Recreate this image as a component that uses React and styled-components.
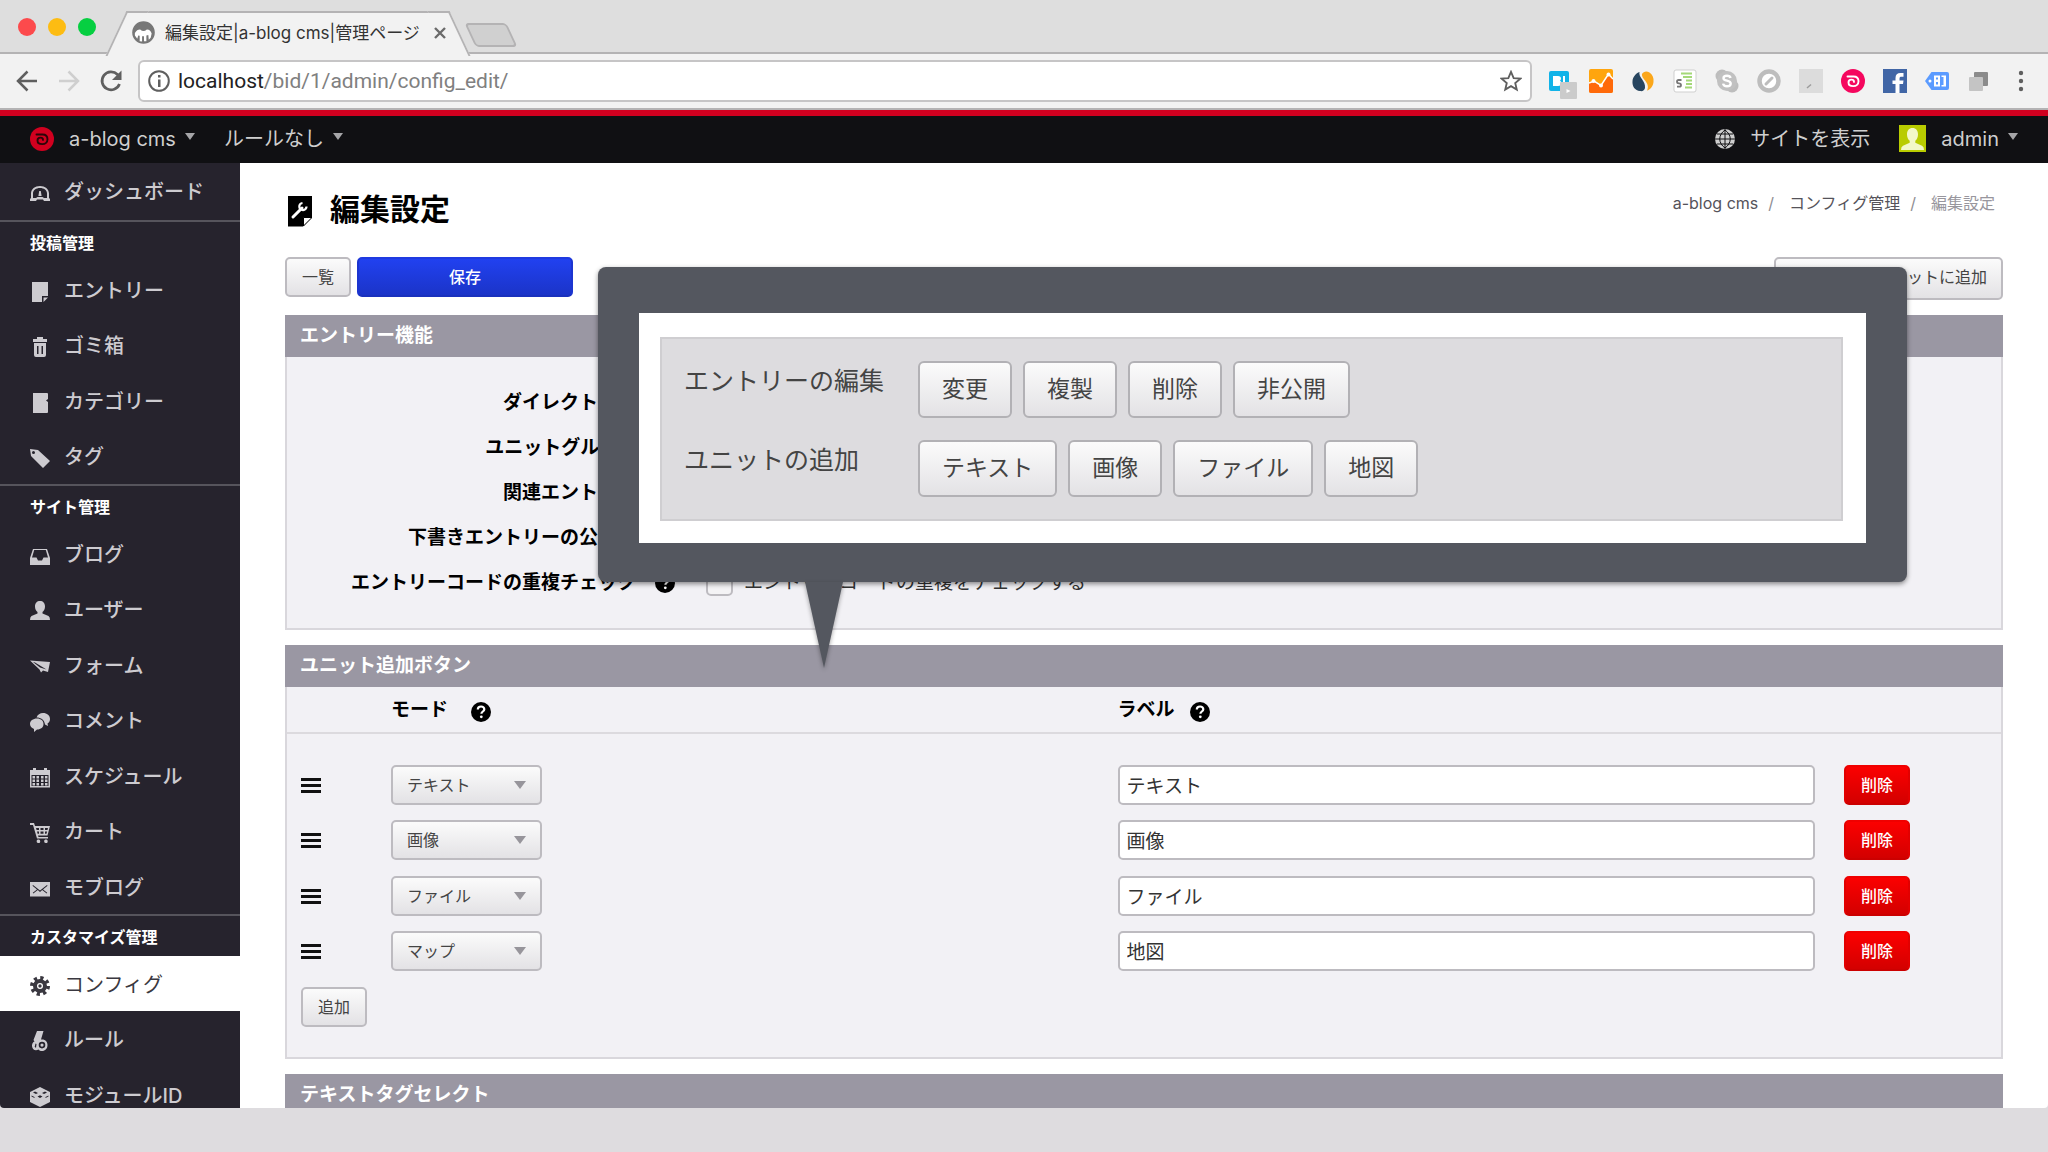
import React, { useState } from 'react';
import styled, { createGlobalStyle, css } from 'styled-components'

const GlobalStyle = createGlobalStyle`
  * {
    box-sizing: border-box;
  }
  html, body {
    margin: 0;
    padding: 0;
    overflow: hidden;
    background: #dedcdf;
  }
  body, button, input, select {
    font-family: Inter, "Noto Sans CJK JP", sans-serif;
  }
  a {
    color: inherit;
    text-decoration: none;
  }
`

// browser window:
const Desktop = styled.div`
  height: 100vh;
  padding-bottom: 44px;
  background: #dedcdf;
`
const Browser = styled.div`
  display: flex;
  flex-direction: column;
  height: 100%;
  overflow: hidden;
  background: #fff;
  border-radius: 0 0 4px 4px;
`
const TabStrip = styled.div`
  display: flex;
  flex: none;
  align-items: flex-end;
  height: 54px;
  background: #dedede;
  box-shadow: inset 0 -2px 0 #b4b3b4;
`
const Lights = styled.div`
  display: flex;
  align-self: center;
  gap: 12px;
  padding-left: 18px;
`
const Light = styled.span`
  width: 18px;
  height: 18px;
  border-radius: 50%;
  background: ${(props) => props.$color};
`
const Tab = styled.div`
  position: relative;
  z-index: 1;
  display: flex;
  align-items: center;
  width: 322px;
  height: 43px;
  margin-left: 31px;
  padding: 0 2px 2px 5px;
  border-top: 2px solid #b4b3b4;
  background: #f2f2f2;
  color: #333;
  font-size: 17px;
  line-height: 24px;
  white-space: nowrap;

  &::before,
  &::after {
    content: '';
    position: absolute;
    z-index: -1;
    top: -2px;
    width: 20px;
    height: 43px;
    border-top: 2px solid #b4b3b4;
    background: #f2f2f2;
  }
  &::before {
    left: -11px;
    border-left: 2px solid #b4b3b4;
    transform: skewX(-25deg);
  }
  &::after {
    right: -11px;
    border-right: 2px solid #b4b3b4;
    transform: skewX(25deg);
  }
`
const TabTitle = styled.span`
  flex: 1;
  margin-left: 10px;
`
const TabClose = styled.button`
  display: flex;
  padding: 0;
  border: 0;
  background: none;
  color: #6b6b6b;
`
const NewTab = styled.button`
  width: 42px;
  height: 24px;
  margin: 0 0 7px 21px;
  padding: 0;
  border: 2px solid #b4b3b4;
  border-radius: 4px;
  background: #d0d0d0;
  transform: skewX(25deg);
`
const Toolbar = styled.div`
  display: flex;
  flex: none;
  align-items: center;
  gap: 15px;
  height: 56px;
  padding: 0 15px;
  border-bottom: 2px solid #b4b3b4;
  background: #f2f2f2;
`
const IconGroup = styled.div`
  display: flex;
  gap: 18px;
`
const IconButton = styled.button`
  display: flex;
  width: 24px;
  height: 24px;
  padding: 0;
  border: 0;
  background: none;
  color: #5f5f5f;

  &:disabled {
    color: #cfcfcf;
  }
`
const AddressBar = styled.div`
  display: flex;
  flex: 1;
  align-items: center;
  height: 42px;
  padding: 0 8px;
  border: 2px solid #c6c5c6;
  border-radius: 6px;
  background: #fff;
  color: #5f5f5f;
`
const Url = styled.div`
  flex: 1;
  margin-left: 8px;
  color: #808080;
  font-family: Roboto, sans-serif;
  font-size: 21px;
  line-height: 30px;
`
const Host = styled.span`
  color: #222;
`

// admin header:
const AdminHeader = styled.header`
  display: flex;
  flex: none;
  justify-content: space-between;
  align-items: center;
  height: 53px;
  padding: 0 30px 2px;
  border-top: 6px solid #d1001f;
  background: #101013;
  color: #cfcfcf;
  font-size: 20px;
  line-height: 28px;
`
const HeaderGroup = styled.nav`
  display: flex;
  align-items: center;
  gap: 29px;
`
const HeaderLink = styled.a`
  display: flex;
  align-items: center;
  gap: 15px;
`
const CaretText = styled.span`
  display: flex;
  align-items: center;
  gap: 9px;

  &::after {
    content: '';
    margin-bottom: 4px;
    border: 5px solid transparent;
    border-top: 7px solid #a5a5a8;
    border-bottom: 0;
  }
`

// side navigation:
const Body = styled.div`
  display: flex;
  flex: 1;
  min-height: 0;
`
const Side = styled.nav`
  flex: none;
  width: 240px;
  background: #26232d;
  color: #cdcbd0;
`
const SideGroup = styled.div`
  & + & {
    border-top: 2px solid #56545c;
  }
`
const SideTitle = styled.h2`
  margin: 0;
  padding: 8px 30px 6px;
  color: #fff;
  font-size: 16px;
  line-height: 26px;
`
const SideList = styled.ul`
  margin: 0;
  padding: 0;
  list-style: none;
`
const SideLink = styled.a`
  display: flex;
  align-items: center;
  gap: 14px;
  padding: 15px 30px 12px;
  font-size: 20px;
  font-weight: 500;
  line-height: 28px;

  ${SideGroup}:first-child > & {
    padding-bottom: 14px;
  }
  li:nth-child(even) > & {
    padding-bottom: 13px;
  }
  svg {
    margin-top: 2px;
  }
  ${(props) =>
    props.$active &&
    css`
      background: #fff;
      color: #3a3840;
      font-weight: 400;
    `}
`

// main column:
const Main = styled.main`
  position: relative;
  flex: 1;
  min-width: 0;
  padding: 0 45px;
`
const PageHead = styled.div`
  display: flex;
  justify-content: space-between;
  align-items: flex-start;
  padding: 22px 8px 24px 3px;
`
const PageTitle = styled.h1`
  display: flex;
  align-items: center;
  gap: 18px;
  margin: 0;
  font-size: 30px;
  line-height: 48px;

  svg {
    margin-top: 4px;
  }
`
const Breadcrumb = styled.ol`
  display: flex;
  margin: 0;
  padding: 5px 0 0;
  color: #55535a;
  font-size: 16px;
  line-height: 26px;
  list-style: none;

  li + li::before {
    content: '/';
    margin: 0 15px 0 10px;
    color: #8f8e93;
  }
  li:last-child {
    color: #98969d;
  }
`
const Actions = styled.div`
  display: flex;
  align-items: flex-start;
  gap: 6px;
  margin-bottom: 15px;
`
const buttonFace = css`
  border: 2px solid #bdbbc0;
  border-radius: 5px;
  background: linear-gradient(#fbfbfb, #e3e2e5);
  color: #444;
`
const Button = styled.button`
  ${buttonFace}
  padding: 5px 15px;
  font-size: 16px;
  line-height: 26px;
`
const SaveButton = styled(Button)`
  width: 216px;
  border-color: #1f3ae0 #1c35d0 #1a31bd;
  background: linear-gradient(#2141f0, #1b34c8);
  color: #fff;
  font-weight: 500;
`
const DeleteButton = styled(Button)`
  border-color: #f00000 #e20000 #cc0000;
  background: linear-gradient(#fb0000, #d30000);
  color: #fff;
  font-weight: 500;
`
const ShortcutButton = styled(Button)`
  width: 229px;
  margin-left: auto;
  padding: 5px 14px 8px;
  text-align: right;
`
const Section = styled.section`
  margin-bottom: 15px;
  border: 2px solid #d9d7dc;
  border-top: 0;
  background: #f2f1f5;
`
const SectionTitle = styled.h2`
  margin: 0 -2px;
  padding: 7px 15px;
  background: #9a97a3;
  color: #fff;
  font-size: 19px;
  line-height: 28px;
`
const Rows = styled.div`
  padding: 23px 0;
`
const Row = styled.div`
  display: flex;
  align-items: center;
  height: 45px;
  font-size: 19px;
  line-height: 28px;
`
const RowLabel = styled.span`
  width: 349px;
  margin-right: 19px;
  font-weight: 700;
  text-align: right;
`
const CheckLabel = styled.label`
  display: flex;
  align-items: center;
  gap: 11px;
  margin-left: 31px;
  color: #333;
`
const Check = styled.input`
  appearance: none;
  width: 27px;
  height: 27px;
  margin: 0;
  border: 2px solid #bdbbc0;
  border-radius: 5px;
  background: #f4f3f5;
`
const Table = styled.table`
  width: 100%;
  border-collapse: collapse;
  table-layout: fixed;
`
const Th = styled.th`
  width: ${(props) => props.$width || 'auto'};
  padding: 9px 0 8px;
  border-bottom: 2px solid #dcdade;
  font-size: 19px;
  line-height: 28px;
  text-align: left;

  svg {
    margin-left: ${(props) => props.$gap || 0}px;
    vertical-align: -6px;
  }
`
const Td = styled.td`
  padding: 8px 0 7px;
  text-align: left;

  tr:first-child > & {
    padding-top: 31px;
  }
  tr:nth-child(even) > & {
    padding-bottom: 8px;
  }
  &:first-child {
    padding-left: 14px;
  }
  svg, input, button {
    display: block;
  }
`
const SelectBox = styled.div`
  position: relative;
  width: 151px;

  &::after {
    content: '';
    position: absolute;
    top: 16px;
    right: 16px;
    border: 6px solid transparent;
    border-top: 8px solid #97959b;
    border-bottom: 0;
    pointer-events: none;
  }
`
const Select = styled.select`
  ${buttonFace}
  display: block;
  appearance: none;
  width: 100%;
  height: 40px;
  padding: 0 14px;
  font-size: 16px;
`
const TextInput = styled.input`
  width: 96%;
  height: 40px;
  padding: 0 7px 2px;
  border: 2px solid #bdbbc0;
  border-radius: 5px;
  background: #fff;
  color: #333;
  font-size: 19px;
`
const TableFoot = styled.div`
  padding: 8px 14px 30px;
`

// magnified toolbar lying over the page:
const Balloon = styled.div`
  position: absolute;
  top: 104px;
  right: 141px;
  left: 358px;
  padding: 46px 41px 39px;
  border-radius: 8px;
  background: #54575f;
  box-shadow: 0 2px 5px rgba(0, 0, 0, 0.45);

  &::after {
    content: '';
    position: absolute;
    top: 100%;
    left: 207px;
    border: 19px solid transparent;
    border-top: 86px solid #54575f;
    border-bottom: 0;
    filter: drop-shadow(0 2px 2px rgba(0, 0, 0, 0.35));
  }
`
const BalloonPage = styled.div`
  padding: 24px 23px 22px 21px;
  background: #fff;
`
const UnitTools = styled.div`
  display: grid;
  gap: 22px;
  padding: 22px;
  border: 2px solid #cfced1;
  background: #dddcdf;
`
const UnitRow = styled.div`
  display: flex;
  gap: 11px;
`
const UnitLabel = styled.span`
  width: 223px;
  padding-top: 1px;
  color: #444;
  font-size: 25px;
  line-height: 38px;
`
const UnitButton = styled.button`
  ${buttonFace}
  border-color: #b2b1b5;
  border-radius: 6px;
  padding: 9px 22px 10px;
  font-size: 23px;
  line-height: 34px;
`

const SpiralLogo = ({ size, color, inner }) => (
  <svg width={size} height={size} viewBox='0 0 24 24'>
    <circle cx='12' cy='12' r='12' fill={color} />
    <path d='M6.500 7.500h6c3 0 5 1.900 5 4.700 0 2.900-2.200 4.900-5.200 4.900-2.900 0-4.800-1.600-4.800-3.700 0-1.700 1.300-2.800 2.900-2.800 1.600 0 2.600 1 2.600 2.300' fill='none' stroke={inner} strokeWidth='1.900' strokeLinecap='round' />
  </svg>
)

const HelpIcon = () => (
  <svg width='20' height='20' viewBox='0 0 20 20'>
    <circle cx='10' cy='10' r='10' fill='#000' />
    <path d='M6.800 7.600c0-1.900 1.400-3.100 3.300-3.100s3.200 1.100 3.200 2.700c0 2.300-2.900 2.300-2.900 4.600' fill='none' stroke='#fff' strokeWidth='2.200' />
    <circle cx='10.300' cy='14.800' r='1.400' fill='#fff' />
  </svg>
)

const DragIcon = () => (
  <svg width='20' height='17' viewBox='0 0 20 17'>
    <path d='M0 1h20v3H0zM0 7h20v3H0zM0 13h20v3H0z' fill='#111' />
  </svg>
)

const icons = {
  dashboard: <path fillRule='evenodd' d='M0 18v-2l1-1V10.500C1 6 5 3 10 3s9 3 9 7.500V15l1 1v2h-6l-1-1.500H7L6 18zm3-3h3l1.500-1h5l1.500 1h3v-4.500C17 7.200 14 5 10 5S3 7.200 3 10.500zM9.200 8h1.600l.8 5H8.400z' />,
  entry: <path d='M2 0h16v14h-6v6H2zM13.500 20v-4.500H18z' />,
  trash: <path fillRule='evenodd' d='M7 2V0h6v2h4v3H3V2zM4 6h12v12q0 2-2 2H6q-2 0-2-2zm3 3v8h1.500V9zm4.500 0v8H13V9z' />,
  category: <path d='M3 0h14q1 0 1 1v5l-2 1.500L18 9v10q0 1-1 1H3z' />,
  tag: <path fillRule='evenodd' d='M0 1l8 1 12 11-7 7L1 8zm3.500 2a1.500 1.500 0 1 0 0 3 1.500 1.500 0 0 0 0-3z' />,
  blog: <path fillRule='evenodd' d='M3 3h14l3 9v7H0v-7zm1.200 1L2 11.500h4.500l1.500 3h4l1.500-3H18L15.800 4z' />,
  user: <path d='M10 0c3 0 5 2 5 5.500 0 2.500-1 4.500-2.500 5.500v1.500l6 2.500q1.500.8 1.500 4H0q0-3.200 1.500-4l6-2.500V11C6 10 5 8 5 5.500 5 2 7 0 10 0z' />,
  form: <path fillRule='evenodd' d='M0 3.500L20 5l-2 10-5-1.500-2 2-1.500-3zM3 5l7 5.500 6.500 2L5 5.500z' />,
  comment: <path d='M13 1c4 0 7 2.500 7 6 0 2-1 3.500-2.500 4.500L18 14l-3-1.500C14.500 8 11 5.500 6.500 5.500 7.500 2.500 10 1 13 1zM7 6.500c4 0 6.500 2.300 6.500 5.500S11 17.500 7 17.500L4 20v-3C1.500 16 0 14.300 0 12c0-3.200 3-5.500 7-5.500z' />,
  schedule: <path fillRule='evenodd' d='M0 2h3V0h3v2h8V0h3v2h3v17.500H0zm1.500 5v11h17V7zM2.500 8H5v2.500H2.500zm4 0H9v2.500H6.500zm4.500 0h2.500v2.500H11zm4 0h2.500v2.500H15zM2.500 11.500H5V14H2.500zm4 0H9V14H6.500zm4.500 0h2.500V14H11zm4 0h2.500V14H15zM2.500 15H5v2.500H2.500zm4 0H9v2.500H6.500zm4.500 0h2.500v2.500H11zm4 0h2.500v2.500H15z' />,
  cart: <path fillRule='evenodd' d='M0 0h4l1 3h15l-2.500 9.500H8l.5 1.500H18v1.500H7L3 2H0zm6 5l.6 2H9V5zm4.500 0v2h3V5zM15 5v2h2.500l.5-2zM7 8.500l.6 2.300H9V8.500zm3.500 0v2.300h3V8.500zm4.500 0v2.300h1.500l.6-2.300zM8 16.500a1.800 1.800 0 1 1 0 3.500 1.800 1.800 0 0 1 0-3.500zm7.500 0a1.800 1.800 0 1 1 0 3.500 1.800 1.800 0 0 1 0-3.500z' />,
  mail: <path fillRule='evenodd' d='M0 3h20v14.500H0zm3 3l-.5.700L7 10.500l-4.200 3.200.5.700L7.800 11 10 13l2.200-2 4.500 3.400.5-.7-4.200-3.200 4.500-3.800L17 6l-7 5.500z' />,
  config: (
    <>
      <circle cx='10' cy='10' r='8' fill='none' stroke='currentColor' strokeWidth='4' strokeDasharray='3.140 3.143' />
      <path fillRule='evenodd' d='M10 3a7 7 0 1 0 0 14 7 7 0 0 0 0-14zm0 4a3 3 0 1 1 0 6 3 3 0 0 1 0-6zm0 1.300a1.700 1.700 0 1 0 0 3.400 1.700 1.700 0 0 0 0-3.400z' />
    </>
  ),
  rule: <path fillRule='evenodd' d='M7 0h6.500L11 8.500c4.500-.5 6.500 2.300 6.500 5.500 0 3.500-2.300 6-5.500 6-1.500 0-2.500-.5-3.500-1.500C5 20.500 2 18 2 15c0-2.500 1-4 2.500-4.500L3.500 9zm5 10.800a3.300 3.300 0 1 0 0 6.600 3.300 3.300 0 0 0 0-6.600zm0 1.700a1.600 1.600 0 1 1 0 3.200 1.600 1.600 0 0 1 0-3.200zM5.500 12.500l-.8 3.500 1.300.8.5-3.800z' />,
  module: <path fillRule='evenodd' d='M10 0l10 5v10l-10 5L0 15V5zM5 4.500l-2 1 3 1.500 2-1zm10 0l-3 1.500 2 1 3-1.500zM7.500 9.500L10 11l2.500-1.500L10 8.300zM1.500 8.500v1l3 1.500v-1zm17 0l-3 1.500v1l3-1.500z' />,
}

const SideIcon = ({ name }) => (
  <svg width='20' height='20' viewBox='0 0 20 20' fill='currentColor'>
    {icons[name]}
  </svg>
)

const sideGroups = [
  {
    title: '投稿管理',
    items: [
      { icon: 'entry', text: 'エントリー' },
      { icon: 'trash', text: 'ゴミ箱' },
      { icon: 'category', text: 'カテゴリー' },
      { icon: 'tag', text: 'タグ' },
    ],
  },
  {
    title: 'サイト管理',
    items: [
      { icon: 'blog', text: 'ブログ' },
      { icon: 'user', text: 'ユーザー' },
      { icon: 'form', text: 'フォーム' },
      { icon: 'comment', text: 'コメント' },
      { icon: 'schedule', text: 'スケジュール' },
      { icon: 'cart', text: 'カート' },
      { icon: 'mail', text: 'モブログ' },
    ],
  },
  {
    title: 'カスタマイズ管理',
    items: [
      { icon: 'config', text: 'コンフィグ', active: true },
      { icon: 'rule', text: 'ルール' },
      { icon: 'module', text: 'モジュールID' },
    ],
  },
]

const features = [
  'ダイレクト編集',
  'ユニットグループ',
  '関連エントリー',
  '下書きエントリーの公開日',
]

const modes = ['テキスト', '画像', 'ファイル', 'マップ']

const Extensions = () => (
  <IconGroup>
    <IconButton aria-label='はてなブックマーク'>
      <svg width='30' height='30' viewBox='0 0 30 30' overflow='visible'>
        <rect x='2' y='2' width='20' height='20' rx='2' fill='#12b3e8' />
        <path fillRule='evenodd' d='M6 7h5q3 0 3 2.500 0 1.500-1 2.200 1.500.8 1.500 2.600Q14.500 17 11 17H6zM16 7h2v6h-2z' fill='#fff' />
        <rect x='13' y='13' width='17' height='17' rx='1' fill='#cbcbcb' />
        <path d='M19.500 20l4 2-4 2z' fill='#fff' />
      </svg>
    </IconButton>
    <IconButton aria-label='アナリティクス'>
      <svg width='24' height='24' viewBox='0 0 24 24'>
        <rect width='24' height='24' rx='2' fill='#ffa50e' />
        <path d='M0 14l5-2 7 5 7-10 5 3v12q0 2-2 2H2q-2 0-2-2z' fill='#ff6a0a' />
        <path d='M0 14l5-2 7 4.500L19.500 5 24 10' fill='none' stroke='#fff' strokeWidth='1.500' />
        <circle cx='4.500' cy='12' r='2' fill='#fff' />
        <circle cx='12' cy='16.500' r='2' fill='#fff' />
        <circle cx='19.500' cy='5.500' r='2' fill='#fff' />
      </svg>
    </IconButton>
    <IconButton aria-label='ウェブ解析'>
      <svg width='24' height='24' viewBox='0 0 24 24'>
        <path d='M8.500 3C7 8 15 12 14 19c-.5 2.500-2.500 3.500-5 3C4 21.500 1 17.500 1.500 12 1.800 8 5 4 8.500 3z' fill='#27455f' />
        <path d='M11 5c1.500-3 5-3.300 7.500-1.500C21.500 5.500 23 9 22.500 13c-.5 4.500-3.500 8-6.500 8.500C20 14 10 10 11 5z' fill='#fba71b' />
      </svg>
    </IconButton>
    <IconButton aria-label='ソース表示'>
      <svg width='24' height='24' viewBox='0 0 24 24'>
        <rect x='1' y='1' width='22' height='22' rx='2' fill='#fff' stroke='#cfcfcf' />
        <path d='M8 4.500h11M10 8h9M13 11.500h6M13 15h6M12 18.500h7' stroke='#a4d878' strokeWidth='1.800' />
        <path d='M8.500 11H5.500q-1.500 0-1.500 1.700 0 1.600 2 1.600t2 1.700q0 1.700-1.500 1.700H4' fill='none' stroke='#777' strokeWidth='1.800' />
      </svg>
    </IconButton>
    <IconButton aria-label='Skype'>
      <svg width='24' height='24' viewBox='0 0 24 24'>
        <circle cx='7' cy='7' r='6.500' fill='#bdbdbd' />
        <circle cx='17' cy='17' r='6.500' fill='#bdbdbd' />
        <circle cx='12' cy='12' r='10' fill='#c1c1c1' />
        <path d='M15.500 9c-.3-1.500-1.700-2.300-3.500-2.300-2 0-3.500.9-3.500 2.500 0 3.300 7.200 1.700 7.200 5.300 0 1.700-1.500 2.800-3.700 2.800-2.100 0-3.600-1-3.900-2.700' fill='none' stroke='#fff' strokeWidth='2.400' />
      </svg>
    </IconButton>
    <IconButton aria-label='ブロック'>
      <svg width='24' height='24' viewBox='0 0 24 24'>
        <circle cx='12' cy='12' r='9.500' fill='#fff' stroke='#bdbdbd' strokeWidth='4.500' />
        <path d='M9 15l6-6' stroke='#bdbdbd' strokeWidth='3' strokeLinecap='round' />
      </svg>
    </IconButton>
    <IconButton aria-label='拡張機能'>
      <svg width='24' height='24' viewBox='0 0 24 24'>
        <rect width='24' height='24' fill='#dcdcdc' />
        <path d='M8 19l4-3.500' stroke='#9c9c9c' strokeWidth='1.500' />
      </svg>
    </IconButton>
    <IconButton aria-label='a-blog cms'>
      <SpiralLogo size={24} color='#f5075e' inner='#fff' />
    </IconButton>
    <IconButton aria-label='Facebook'>
      <svg width='24' height='24' viewBox='0 0 24 24'>
        <rect width='24' height='24' fill='#4166a6' />
        <path d='M12.500 24v-9H9.500v-3.500h3V9c0-3.200 1.800-5 5-5h3v3.700h-2c-1.500 0-2 .6-2 2v1.800h4l-.5 3.500h-3.500v9z' fill='#fff' />
      </svg>
    </IconButton>
    <IconButton aria-label='タグ管理'>
      <svg width='24' height='24' viewBox='0 0 24 24'>
        <path d='M6.500 3H22q2 0 2 2v14q0 2-2 2H6.500L0 12z' fill='#5b9bff' />
        <circle cx='5' cy='12' r='1.500' fill='#fff' />
        <path fillRule='evenodd' d='M9 6.500h6v11H9zm2 2v2h2v-2zm0 4.500v2.500h2V13zM16.500 6.500H21v11h-4.500v-1.500h2v-8h-2z' fill='#fff' />
      </svg>
    </IconButton>
    <IconButton aria-label='ウィンドウ'>
      <svg width='24' height='24' viewBox='0 0 24 24'>
        <rect x='7' y='3' width='14' height='14' rx='1' fill='#8b8b8b' />
        <rect x='2' y='8' width='14' height='14' rx='1' fill='#c4c4c4' />
      </svg>
    </IconButton>
    <IconButton aria-label='メニュー'>
      <svg width='24' height='24' viewBox='0 0 24 24' fill='currentColor'>
        <circle cx='12' cy='4' r='2.200' />
        <circle cx='12' cy='12' r='2.200' />
        <circle cx='12' cy='20' r='2.200' />
      </svg>
    </IconButton>
  </IconGroup>
)

const BrowserChrome = () => (
  <>
    <TabStrip>
      <Lights>
        <Light $color='#fc4a4c' />
        <Light $color='#fdbc12' />
        <Light $color='#06cf41' />
      </Lights>
      <Tab>
        <svg width='23' height='23' viewBox='0 0 24 24'>
          <circle cx='12' cy='12' r='10.800' fill='#777' stroke='#777' strokeWidth='2' />
          <path d='M3 12.500q2.500-4 6-3.500 1 1.500 3 1.500T15 9q4-.5 5.500 4l-1 4.500-2 2-.5-5-2 .5v6h-2.500v-5h-2v5.500L8 21v-5.500L6.500 15l-1 3.500L3 15z' fill='#fff' />
        </svg>
        <TabTitle>編集設定|a-blog cms|管理ページ</TabTitle>
        <TabClose aria-label='閉じる'>
          <svg width='14' height='14' viewBox='0 0 14 14'>
            <path d='M2 2l10 10M12 2L2 12' stroke='currentColor' strokeWidth='2.400' />
          </svg>
        </TabClose>
      </Tab>
      <NewTab aria-label='新しいタブ' />
    </TabStrip>
    <Toolbar>
      <IconGroup>
        <IconButton aria-label='戻る'>
          <svg width='24' height='24' viewBox='0 0 24 24' fill='none' stroke='currentColor' strokeWidth='2.500'>
            <path d='M22 12H3M12.500 2.500L3 12l9.500 9.500' />
          </svg>
        </IconButton>
        <IconButton aria-label='進む' disabled>
          <svg width='24' height='24' viewBox='0 0 24 24' fill='none' stroke='currentColor' strokeWidth='2.500'>
            <path d='M2 12h19M11.500 2.500L21 12l-9.500 9.500' />
          </svg>
        </IconButton>
        <IconButton aria-label='再読み込み'>
          <svg width='24' height='24' viewBox='0 0 24 24'>
            <path d='M20.500 15A9 9 0 1 1 18.500 5.500L20 7' fill='none' stroke='currentColor' strokeWidth='2.700' />
            <path d='M22.500 1.500V11H13z' fill='currentColor' />
          </svg>
        </IconButton>
      </IconGroup>
      <AddressBar>
        <svg width='22' height='22' viewBox='0 0 22 22'>
          <circle cx='11' cy='11' r='9.800' fill='none' stroke='currentColor' strokeWidth='2' />
          <path d='M10 5h2.500v2.500H10zM10 9.500h2.500V17H10z' fill='currentColor' />
        </svg>
        <Url>
          <Host>localhost</Host>/bid/1/admin/config_edit/
        </Url>
        <svg width='22' height='22' viewBox='0 0 24 24' fill='none' stroke='currentColor' strokeWidth='2'>
          <path d='M12 2l2.900 6.800 7.300.6-5.600 4.800 1.700 7.200L12 17.600l-6.300 3.800 1.700-7.200L1.800 9.400l7.300-.6z' />
        </svg>
      </AddressBar>
      <Extensions />
    </Toolbar>
  </>
)

const Header = () => (
  <AdminHeader>
    <HeaderGroup>
      <HeaderLink href='#blog'>
        <SpiralLogo size={24} color='#d1001f' inner='#2a0508' />
        <CaretText>a-blog cms</CaretText>
      </HeaderLink>
      <HeaderLink href='#rule'>
        <CaretText>ルールなし</CaretText>
      </HeaderLink>
    </HeaderGroup>
    <HeaderGroup>
      <HeaderLink href='#site'>
        <svg width='20' height='20' viewBox='0 0 20 20'>
          <circle cx='10' cy='10' r='10' fill='#cfcfcf' />
          <path d='M10 0v20M0 10h20M2 5h16M2 15h16M10 1C3 6 3 14 10 19M10 1c7 5 7 13 0 18' fill='none' stroke='#101013' />
        </svg>
        サイトを表示
      </HeaderLink>
      <HeaderLink href='#admin'>
        <svg width='27' height='27' viewBox='0 0 27 27'>
          <rect width='27' height='27' fill='#b9cc00' />
          <path d='M13.500 3c3.500 0 5.500 2.500 5.500 6.500 0 3-1.200 5-2.700 6.200v2l6.700 3q2 1 2 4.300H2q0-3.300 2-4.300l6.700-3v-2C9.200 14.500 8 12.500 8 9.500 8 5.500 10 3 13.500 3z' fill='#f3f8c8' />
        </svg>
        <CaretText>admin</CaretText>
      </HeaderLink>
    </HeaderGroup>
  </AdminHeader>
)

const SideNav = () => (
  <Side>
    <SideGroup>
      <SideLink href='#dashboard'>
        <SideIcon name='dashboard' />
        ダッシュボード
      </SideLink>
    </SideGroup>
    {sideGroups.map((group) => (
      <SideGroup key={group.title}>
        <SideTitle>{group.title}</SideTitle>
        <SideList>
          {group.items.map((item) => (
            <li key={item.text}>
              <SideLink href={`#${item.icon}`} $active={item.active}>
                <SideIcon name={item.icon} />
                {item.text}
              </SideLink>
            </li>
          ))}
        </SideList>
      </SideGroup>
    ))}
  </Side>
)

const UnitTable = () => {
  const [units, setUnits] = useState([
    { mode: 'テキスト', label: 'テキスト' },
    { mode: '画像', label: '画像' },
    { mode: 'ファイル', label: 'ファイル' },
    { mode: 'マップ', label: '地図' },
  ])

  const change = (index, key, value) => {
    setUnits(units.map((unit, i) => (i === index ? { ...unit, [key]: value } : unit)))
  }

  return (
    <>
      <Table>
        <thead>
          <tr>
            <Th $width='104px' />
            <Th $gap={23}>モード<HelpIcon /></Th>
            <Th $gap={15}>ラベル<HelpIcon /></Th>
            <Th $width='157px' />
          </tr>
        </thead>
        <tbody>
          {units.map((unit, index) => (
            <tr key={index}>
              <Td><DragIcon /></Td>
              <Td>
                <SelectBox>
                  <Select
                    aria-label='モード'
                    value={unit.mode}
                    onChange={(e) => change(index, 'mode', e.target.value)}
                  >
                    {modes.map((mode) => <option key={mode}>{mode}</option>)}
                  </Select>
                </SelectBox>
              </Td>
              <Td>
                <TextInput
                  aria-label='ラベル'
                  value={unit.label}
                  onChange={(e) => change(index, 'label', e.target.value)}
                />
              </Td>
              <Td>
                <DeleteButton onClick={() => setUnits(units.filter((_, i) => i !== index))}>削除</DeleteButton>
              </Td>
            </tr>
          ))}
        </tbody>
      </Table>
      <TableFoot>
        <Button onClick={() => setUnits([...units, { mode: 'テキスト', label: '' }])}>追加</Button>
      </TableFoot>
    </>
  )
}

const UnitBalloon = () => (
  <Balloon>
    <BalloonPage>
      <UnitTools>
        <UnitRow>
          <UnitLabel>エントリーの編集</UnitLabel>
          <UnitButton>変更</UnitButton>
          <UnitButton>複製</UnitButton>
          <UnitButton>削除</UnitButton>
          <UnitButton>非公開</UnitButton>
        </UnitRow>
        <UnitRow>
          <UnitLabel>ユニットの追加</UnitLabel>
          <UnitButton>テキスト</UnitButton>
          <UnitButton>画像</UnitButton>
          <UnitButton>ファイル</UnitButton>
          <UnitButton>地図</UnitButton>
        </UnitRow>
      </UnitTools>
    </BalloonPage>
  </Balloon>
)

const App = () => {
  return (
    <Desktop>
      <GlobalStyle />
      <Browser>
        <BrowserChrome />
        <Header />
        <Body>
          <SideNav />
          <Main>
            <PageHead>
              <PageTitle>
                <svg width='24' height='31' viewBox='0 0 24 31'>
                  <path d='M0 0h24v21l-9 9.500H0z' fill='#000' />
                  <path d='M15.500 30v-8.500H24z' fill='#fff' stroke='#000' />
                  <path d='M5 21l9-9' stroke='#fff' strokeWidth='3' strokeLinecap='round' />
                  <path d='M18.500 10.500a3.600 3.600 0 1 1-4-3.500' fill='none' stroke='#fff' strokeWidth='2.200' />
                </svg>
                編集設定
              </PageTitle>
              <Breadcrumb>
                <li><a href='#top'>a-blog cms</a></li>
                <li><a href='#config'>コンフィグ管理</a></li>
                <li>編集設定</li>
              </Breadcrumb>
            </PageHead>
            <Actions>
              <Button>一覧</Button>
              <SaveButton>保存</SaveButton>
              <ShortcutButton>ショートカットに追加</ShortcutButton>
            </Actions>
            <Section>
              <SectionTitle>エントリー機能</SectionTitle>
              <Rows>
                {features.map((feature) => (
                  <Row key={feature}>
                    <RowLabel>{feature}</RowLabel>
                    <HelpIcon />
                  </Row>
                ))}
                <Row>
                  <RowLabel>エントリーコードの重複チェック</RowLabel>
                  <HelpIcon />
                  <CheckLabel>
                    <Check type='checkbox' />
                    エントリーコードの重複をチェックする
                  </CheckLabel>
                </Row>
              </Rows>
            </Section>
            <Section>
              <SectionTitle>ユニット追加ボタン</SectionTitle>
              <UnitTable />
            </Section>
            <Section>
              <SectionTitle>テキストタグセレクト</SectionTitle>
            </Section>
            <UnitBalloon />
          </Main>
        </Body>
      </Browser>
    </Desktop>
  )
}

export default App;
